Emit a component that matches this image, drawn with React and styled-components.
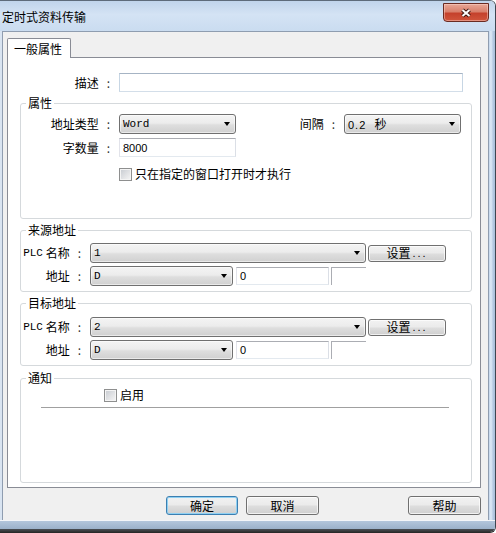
import styled, { createGlobalStyle } from "styled-components";

const GlobalStyle = createGlobalStyle`
  * { box-sizing: border-box; }
  html, body { margin: 0; padding: 0; background: #ffffff; }
  body {
    font-family: "Noto Sans CJK SC", "Noto Sans", sans-serif;
    font-size: 12px;
    color: #000000;
  }
`;

export default function App() {
  return (
    <>
      <GlobalStyle />
      <Window>
        <TitleBar>
          <Title>定时式资料传输</Title>
          <CloseButton>
            <svg width="12" height="10" viewBox="0 0 12 10">
              <path d="M2.5 2 L9.5 8 M9.5 2 L2.5 8" stroke="#3d1711" strokeWidth="4" />
              <path d="M2.5 2 L9.5 8 M9.5 2 L2.5 8" stroke="#ffffff" strokeWidth="2" />
            </svg>
          </CloseButton>
        </TitleBar>
        <Body>
          <LeftFrame />
          <Client>
            <TabStrip>
              <Tab>一般属性</Tab>
            </TabStrip>
            <Panel>
              <Row>
                <Label $w={93}>描述<Colon>:</Colon></Label>
                <TextBox $w={344} $h={19} $blue />
              </Row>

              <Group $mt={4} $pt={4} $pb={37}>
                <Legend>属性</Legend>
                <Row>
                  <Label $w={92}>地址类型<Colon>:</Colon></Label>
                  <Combo $w={117}>
                    <ComboText $mono>Word</ComboText>
                    <Arrow />
                  </Combo>
                  <Label $w={102}>间隔<Colon>:</Colon></Label>
                  <Combo $w={117}>
                    <ComboText>0.2&nbsp;&nbsp;<Cjk>秒</Cjk></ComboText>
                    <Arrow />
                  </Combo>
                </Row>
                <Row $mt={4}>
                  <Label $w={92}>字数量<Colon>:</Colon></Label>
                  <TextBox $w={117} $h={19}>8000</TextBox>
                </Row>
                <CheckRow $ml={98} $mt={10}>
                  <CheckBox />
                  只在指定的窗口打开时才执行
                </CheckRow>
              </Group>

              <Group $mt={4} $pt={6} $pb={5}>
                <Legend>来源地址</Legend>
                <Row>
                  <Label $w={63}><Mono>PLC</Mono>&nbsp;名称<Colon>:</Colon></Label>
                  <Combo $w={276}>
                    <ComboText $mono>1</ComboText>
                    <Arrow />
                  </Combo>
                  <SmallButton>设置<Dots>...</Dots></SmallButton>
                </Row>
                <Row $mt={3}>
                  <Label $w={63}>地址<Colon>:</Colon></Label>
                  <Combo $w={143}>
                    <ComboText $mono>D</ComboText>
                    <Arrow />
                  </Combo>
                  <TextBox $w={93} $h={18} $ml={3}>0</TextBox>
                  <StubBox />
                </Row>
              </Group>

              <Group $mt={4} $pt={7} $pb={5}>
                <Legend>目标地址</Legend>
                <Row>
                  <Label $w={63}><Mono>PLC</Mono>&nbsp;名称<Colon>:</Colon></Label>
                  <Combo $w={276}>
                    <ComboText $mono>2</ComboText>
                    <Arrow />
                  </Combo>
                  <SmallButton>设置<Dots>...</Dots></SmallButton>
                </Row>
                <Row $mt={3}>
                  <Label $w={63}>地址<Colon>:</Colon></Label>
                  <Combo $w={143}>
                    <ComboText $mono>D</ComboText>
                    <Arrow />
                  </Combo>
                  <TextBox $w={93} $h={18} $ml={3}>0</TextBox>
                  <StubBox />
                </Row>
              </Group>

              <Group $mt={5} $pt={3} $pb={74}>
                <Legend>通知</Legend>
                <CheckRow $ml={83}>
                  <CheckBox />
                  启用
                </CheckRow>
                <Separator />
              </Group>
            </Panel>

            <ButtonRow>
              <DialogButton $default>确定</DialogButton>
              <DialogButton>取消</DialogButton>
              <DialogButton $push>帮助</DialogButton>
            </ButtonRow>
          </Client>
          <RightFrame />
        </Body>
        <BottomFrame />
      </Window>
    </>
  );
}

const Window = styled.div`
  width: 496px;
  height: 533px;
  display: flex;
  flex-direction: column;
  overflow: hidden;
  background: #f0f0f0;
  border-top: 1px solid #5e6b7a;
  border-right: 1px solid #3e4650;
  border-bottom: 1px solid #2a2a2a;
  border-top-right-radius: 6px;
  border-bottom-right-radius: 6px;
`;

const TitleBar = styled.div`
  height: 30px;
  flex: none;
  display: flex;
  justify-content: space-between;
  align-items: flex-start;
  padding: 0 6px 0 2px;
  background: linear-gradient(
    to bottom,
    #c0d4eb 0%,
    #d4e3f4 45%,
    #cadcf0 100%
  );
`;

const Title = styled.span`
  margin-top: 9px;
  font-size: 12px;
  line-height: 14px;
  color: #000000;
`;

const CloseButton = styled.div`
  margin-top: 2px;
  width: 46px;
  height: 19px;
  display: flex;
  align-items: center;
  justify-content: center;
  border: 1px solid #6a2b22;
  border-radius: 0 0 4px 4px;
  background: linear-gradient(
    to bottom,
    #e8a796 0%,
    #d9806c 45%,
    #c5412c 55%,
    #d0553c 100%
  );
  box-shadow: inset 0 0 0 1px rgba(255, 220, 210, 0.45);
`;

const Body = styled.div`
  flex: 1;
  display: flex;
  min-height: 0;
`;

const LeftFrame = styled.div`
  width: 2px;
  flex: none;
  background: #d9e4f1;
`;

const RightFrame = styled.div`
  width: 6px;
  flex: none;
  background: linear-gradient(
    to right,
    #c3d6ec 0,
    #dfeaf6 2px,
    #b7cbe3 4px,
    #a9bfd9 6px
  );
`;

const BottomFrame = styled.div`
  height: 12px;
  flex: none;
  background: linear-gradient(
    to bottom,
    #f4f6f9 0,
    #f4f6f9 1px,
    #b3c6dc 1px,
    #9bb1ca 9px,
    #4a4f56 9px,
    #303030 12px
  );
`;

const Client = styled.div`
  width: 487px;
  flex: none;
  display: flex;
  flex-direction: column;
  padding: 6px 7px 0 4px;
  background: #f0f0f0;
  border: 1px solid #8f9db0;
  border-bottom: none;
`;

const TabStrip = styled.div`
  display: flex;
  position: relative;
  z-index: 1;
`;

const Tab = styled.div`
  width: 64px;
  height: 20px;
  margin-bottom: -1px;
  padding-left: 6px;
  display: flex;
  align-items: center;
  background: #ffffff;
  border: 1px solid #898c95;
  border-bottom: none;
  border-radius: 2px 2px 0 0;
  line-height: 14px;
`;

const Panel = styled.div`
  height: 431px;
  display: flex;
  flex-direction: column;
  padding: 15px 8px 0 12px;
  background: #ffffff;
  border: 1px solid #898c95;
`;

const Row = styled.div`
  display: flex;
  align-items: center;
  margin-top: ${(p) => p.$mt || 0}px;
`;

const Label = styled.div`
  width: ${(p) => p.$w}px;
  flex: none;
  display: flex;
  justify-content: flex-end;
  align-items: center;
  margin-right: 6px;
  line-height: 14px;
  white-space: nowrap;
`;

const Colon = styled.span`
  margin-left: 8px;
  margin-right: 3px;
  color: #333333;
`;

const Mono = styled.span`
  font-family: "Liberation Mono", "DejaVu Sans Mono", monospace;
  font-size: 11px;
`;

const Cjk = styled.span`
  font-family: "Noto Sans CJK SC", sans-serif;
  font-size: 12px;
`;

const TextBox = styled.div`
  width: ${(p) => p.$w}px;
  height: ${(p) => p.$h}px;
  flex: none;
  margin-left: ${(p) => p.$ml || 0}px;
  padding-left: 3px;
  display: flex;
  align-items: center;
  background: #ffffff;
  border: 1px solid;
  border-color: ${(p) =>
    p.$blue ? "#a6b4c4 #c7d6e4 #d3dee9 #c7d6e4" : "#abadb3 #dbdfe6 #e3e9ef #e2e3ea"};
  font-family: "Liberation Sans", Arial, sans-serif;
  font-size: 11px;
`;

const StubBox = styled.div`
  width: 35px;
  height: 18px;
  flex: none;
  margin-left: 2px;
  border-top: 1px solid #abadb3;
  border-left: 1px solid #abadb3;
`;

const Combo = styled.div`
  width: ${(p) => p.$w}px;
  height: 20px;
  flex: none;
  display: flex;
  align-items: center;
  justify-content: space-between;
  padding: 0 5px 0 3px;
  border: 1px solid #707070;
  border-radius: 3px;
  background: linear-gradient(
    to bottom,
    #f4f4f4 0%,
    #ececec 45%,
    #dedede 55%,
    #d0d0d0 100%
  );
  box-shadow: inset 0 0 0 1px rgba(255, 255, 255, 0.55);
`;

const ComboText = styled.span`
  font-family: ${(p) =>
    p.$mono
      ? '"Liberation Mono", "DejaVu Sans Mono", monospace'
      : '"Liberation Sans", Arial, sans-serif'};
  font-size: 11px;
  letter-spacing: ${(p) => (p.$mono ? 0 : 1)}px;
  line-height: 14px;
`;

const Arrow = styled.span`
  width: 1px;
  height: 0;
  border-left: 3px solid transparent;
  border-right: 3px solid transparent;
  border-top: 4px solid #000000;
`;

const SmallButton = styled.div`
  width: 78px;
  height: 17px;
  flex: none;
  margin-left: 2px;
  display: flex;
  align-items: center;
  justify-content: center;
  border: 1px solid #707070;
  border-radius: 3px;
  background: linear-gradient(
    to bottom,
    #f2f2f2 0%,
    #ebebeb 45%,
    #dddddd 55%,
    #cfcfcf 100%
  );
  box-shadow: inset 0 0 0 1px rgba(255, 255, 255, 0.7);
  line-height: 14px;
`;

const Dots = styled.span`
  font-family: "Liberation Sans", Arial, sans-serif;
  font-size: 11px;
  letter-spacing: 2px;
  margin-left: 2px;
`;

const Group = styled.fieldset`
  margin: ${(p) => p.$mt}px 0 0;
  padding: ${(p) => p.$pt}px 0 ${(p) => p.$pb}px 0;
  min-inline-size: 0;
  border: 1px solid #d5d9dc;
  border-radius: 3px;
`;

const Legend = styled.legend`
  margin-left: 5px;
  padding: 0 2px;
  font-size: 12px;
  line-height: 14px;
`;

const CheckRow = styled.div`
  display: flex;
  align-items: center;
  height: 14px;
  margin-top: ${(p) => p.$mt || 0}px;
  margin-left: ${(p) => p.$ml}px;
  line-height: 14px;
`;

const CheckBox = styled.span`
  width: 13px;
  height: 13px;
  flex: none;
  margin-right: 3px;
  border: 1px solid #8e8f8f;
  background: linear-gradient(135deg, #c6cad0 0%, #e4e5e7 60%, #f6f6f6 100%);
  box-shadow: inset 0 0 0 1px #f4f4f4;
`;

const Separator = styled.div`
  width: 408px;
  height: 1px;
  margin: 5px 0 0 20px;
  background: #a0a0a0;
`;

const ButtonRow = styled.div`
  display: flex;
  margin-top: 8px;
  padding-left: 159px;
  gap: 8px;
`;

const DialogButton = styled.div`
  width: ${(p) => (p.$default ? 72 : 73)}px;
  height: 19px;
  margin-left: ${(p) => (p.$push ? "auto" : "0")};
  display: flex;
  align-items: center;
  justify-content: center;
  border: 1px solid ${(p) => (p.$default ? "#3c7fb1" : "#707070")};
  border-radius: 3px;
  background: linear-gradient(
    to bottom,
    #f2f2f2 0%,
    #ebebeb 45%,
    #dddddd 55%,
    #cfcfcf 100%
  );
  box-shadow: inset 0 0 0 1px
    ${(p) => (p.$default ? "#8fd0f2" : "rgba(255, 255, 255, 0.7)")};
  line-height: 14px;
`;
